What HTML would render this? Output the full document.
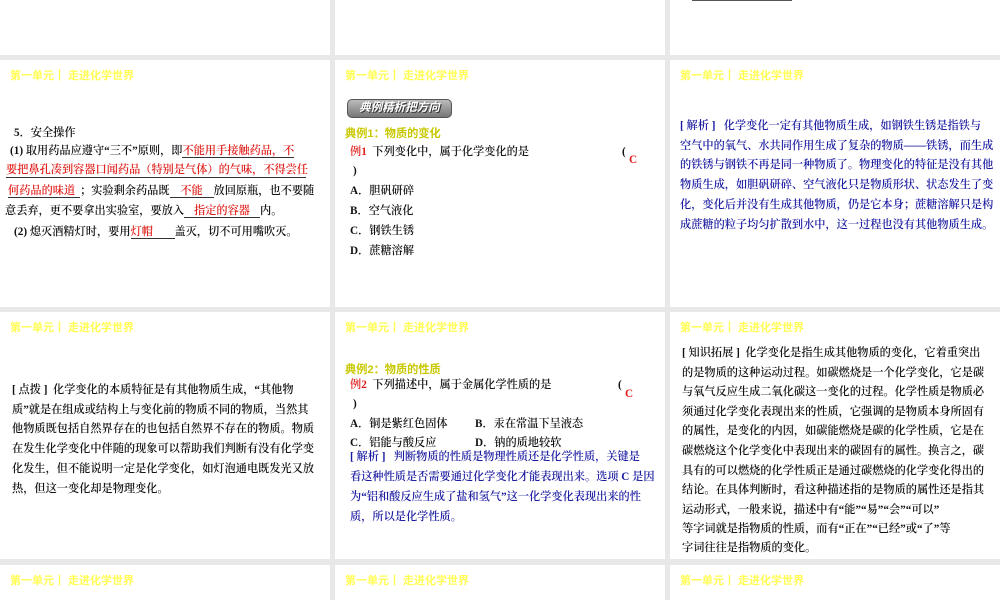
<!DOCTYPE html>
<html><head><meta charset="utf-8"><style>
html,body{margin:0;padding:0;width:1000px;height:600px;overflow:hidden;background:#e8e8e8}
body{position:relative;font-family:"Liberation Sans","Noto Sans CJK SC",sans-serif}
.p{position:absolute;background:#fff;overflow:hidden}
.h{position:absolute;left:10px;top:7px;font-size:11px;font-weight:bold;color:#ffff55;white-space:nowrap;font-family:"Liberation Sans","Noto Sans CJK SC",sans-serif}
.l{position:absolute;white-space:nowrap;font-size:11.2px;color:#111;line-height:14px;font-family:"Liberation Serif","Noto Serif CJK SC",serif;font-weight:600}
.r{color:#e0201c}
.b{color:#1a1aa0}
.y{color:#c8c800;font-weight:bold;font-family:"Liberation Sans","Noto Sans CJK SC",sans-serif}
.u{display:inline-block;border-bottom:1px solid #333;text-align:center;color:#e0201c;line-height:12px}
</style></head><body>
<div class="p" style="left:0;top:0;width:330px;height:55px"></div>
<div class="p" style="left:335px;top:0;width:330px;height:55px"></div>
<div class="p" style="left:670px;top:0;width:330px;height:55px"><div style="position:absolute;left:22px;top:0;width:100px;border-top:1px solid #555"></div></div>

<div class="p" style="left:0;top:60px;width:330px;height:247px">
<div class="h">第一单元┃ 走进化学世界</div>
<div class="l" style="left:14px;top:66px">5．安全操作</div>
<div class="l" style="left:10px;top:84px">(1) 取用药品应遵守“三不”原则，即<span class="u" style="width:112px;text-align:left">不能用手接触药品，不</span></div>
<div class="l r" style="left:6px;top:103px;border-bottom:1px solid #333;width:300px">要把鼻孔凑到容器口闻药品（特别是气体）的气味，不得尝任</div>
<div class="l" style="left:8px;top:124px"><span class="u" style="width:72px;text-align:left">何药品的味道</span>；实验剩余药品既<span class="u" style="width:44px">不能</span>放回原瓶，也不要随</div>
<div class="l" style="left:5px;top:144px">意丢弃，更不要拿出实验室，要放入<span class="u" style="width:76px">指定的容器</span>内。</div>
<div class="l" style="left:14px;top:165px">(2) 熄灭酒精灯时，要用<span class="u" style="width:44px;text-align:left">灯帽</span>盖灭，切不可用嘴吹灭。</div>
</div>

<div class="p" style="left:335px;top:60px;width:330px;height:247px">
<div class="h">第一单元┃ 走进化学世界</div>
<div style="position:absolute;left:12px;top:39px;width:103px;height:17px;border-radius:5px;background:linear-gradient(#bbb,#777);border:1px solid #555;color:#fff;font-size:11.5px;font-style:italic;font-weight:bold;line-height:17px;text-align:center;font-family:'Liberation Sans','Noto Sans CJK SC',sans-serif;text-shadow:1px 1px 0 #333">典例精析把方向</div>
<div class="l y" style="left:10px;top:67px">典例1：物质的变化</div>
<div class="l" style="left:15px;top:85px"><span class="r">例1</span>&nbsp; 下列变化中，属于化学变化的是</div>
<div class="l" style="left:287px;top:85px">(</div>
<div class="l r" style="left:294px;top:93px">C</div>
<div class="l" style="left:18px;top:104px">)</div>
<div class="l" style="left:15px;top:124px">A．胆矾研碎</div>
<div class="l" style="left:15px;top:144px">B．空气液化</div>
<div class="l" style="left:15px;top:164px">C．钢铁生锈</div>
<div class="l" style="left:15px;top:184px">D．蔗糖溶解</div>
</div>

<div class="p" style="left:670px;top:60px;width:330px;height:247px">
<div class="h">第一单元┃ 走进化学世界</div>
<div class="l b" style="left:10px;top:59px">[ 解析 ]&nbsp;&nbsp; 化学变化一定有其他物质生成，如钢铁生锈是指铁与</div>
<div class="l b" style="left:10px;top:79px">空气中的氧气、水共同作用生成了复杂的物质——铁锈，而生成</div>
<div class="l b" style="left:10px;top:98px">的铁锈与钢铁不再是同一种物质了。物理变化的特征是没有其他</div>
<div class="l b" style="left:10px;top:118px">物质生成，如胆矾研碎、空气液化只是物质形状、状态发生了变</div>
<div class="l b" style="left:10px;top:138px">化，变化后并没有生成其他物质，仍是它本身；蔗糖溶解只是构</div>
<div class="l b" style="left:10px;top:158px">成蔗糖的粒子均匀扩散到水中，这一过程也没有其他物质生成。</div>
</div>

<div class="p" style="left:0;top:312px;width:330px;height:247px">
<div class="h">第一单元┃ 走进化学世界</div>
<div class="l" style="left:12px;top:71px">[ 点拨 ]&nbsp; 化学变化的本质特征是有其他物质生成，“其他物</div>
<div class="l" style="left:12px;top:91px">质”就是在组成或结构上与变化前的物质不同的物质，当然其</div>
<div class="l" style="left:12px;top:110px">他物质既包括自然界存在的也包括自然界不存在的物质。物质</div>
<div class="l" style="left:12px;top:130px">在发生化学变化中伴随的现象可以帮助我们判断有没有化学变</div>
<div class="l" style="left:12px;top:150px">化发生，但不能说明一定是化学变化，如灯泡通电既发光又放</div>
<div class="l" style="left:12px;top:170px">热，但这一变化却是物理变化。</div>
</div>

<div class="p" style="left:335px;top:312px;width:330px;height:247px">
<div class="h">第一单元┃ 走进化学世界</div>
<div class="l y" style="left:10px;top:51px">典例2：物质的性质</div>
<div class="l" style="left:15px;top:66px"><span class="r">例2</span>&nbsp; 下列描述中，属于金属化学性质的是</div>
<div class="l" style="left:283px;top:66px">(</div>
<div class="l r" style="left:290px;top:75px">C</div>
<div class="l" style="left:18px;top:85px">)</div>
<div class="l" style="left:15px;top:105px">A．铜是紫红色固体</div>
<div class="l" style="left:140px;top:105px">B．汞在常温下呈液态</div>
<div class="l" style="left:15px;top:124px">C．铝能与酸反应</div>
<div class="l" style="left:140px;top:124px">D．钠的质地较软</div>
<div class="l b" style="left:15px;top:138px">[ 解析 ]&nbsp;&nbsp; 判断物质的性质是物理性质还是化学性质，关键是</div>
<div class="l b" style="left:15px;top:158px">看这种性质是否需要通过化学变化才能表现出来。选项 C 是因</div>
<div class="l b" style="left:15px;top:178px">为“铝和酸反应生成了盐和氢气”这一化学变化表现出来的性</div>
<div class="l b" style="left:15px;top:198px">质，所以是化学性质。</div>
</div>

<div class="p" style="left:670px;top:312px;width:330px;height:247px">
<div class="h">第一单元┃ 走进化学世界</div>
<div class="l" style="left:12px;top:34px">[ 知识拓展 ]&nbsp; 化学变化是指生成其他物质的变化，它着重突出</div>
<div class="l" style="left:12px;top:54px">的是物质的这种运动过程。如碳燃烧是一个化学变化，它是碳</div>
<div class="l" style="left:12px;top:73px">与氧气反应生成二氧化碳这一变化的过程。化学性质是物质必</div>
<div class="l" style="left:12px;top:93px">须通过化学变化表现出来的性质，它强调的是物质本身所固有</div>
<div class="l" style="left:12px;top:112px">的属性，是变化的内因，如碳能燃烧是碳的化学性质，它是在</div>
<div class="l" style="left:12px;top:132px">碳燃烧这个化学变化中表现出来的碳固有的属性。换言之，碳</div>
<div class="l" style="left:12px;top:152px">具有的可以燃烧的化学性质正是通过碳燃烧的化学变化得出的</div>
<div class="l" style="left:12px;top:171px">结论。在具体判断时，看这种描述指的是物质的属性还是指其</div>
<div class="l" style="left:12px;top:191px">运动形式，一般来说，描述中有“能”“易”“会”“可以”</div>
<div class="l" style="left:12px;top:210px">等字词就是指物质的性质，而有“正在”“已经”或“了”等</div>
<div class="l" style="left:12px;top:229px">字词往往是指物质的变化。</div>
</div>

<div class="p" style="left:0;top:565px;width:330px;height:40px"><div class="h">第一单元┃ 走进化学世界</div></div>
<div class="p" style="left:335px;top:565px;width:330px;height:40px"><div class="h">第一单元┃ 走进化学世界</div></div>
<div class="p" style="left:670px;top:565px;width:330px;height:40px"><div class="h">第一单元┃ 走进化学世界</div></div>
</body></html>
